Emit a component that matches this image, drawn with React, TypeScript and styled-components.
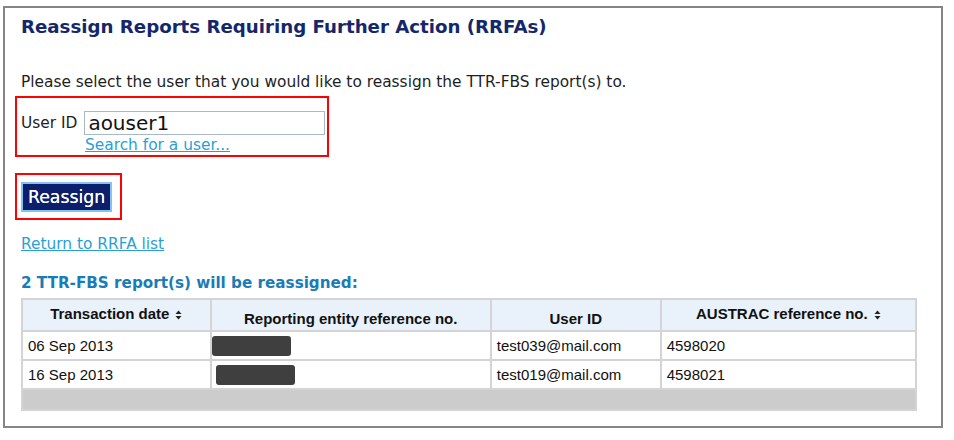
import styled, { createGlobalStyle } from 'styled-components';

const GlobalStyle = createGlobalStyle`
  html, body {
    margin: 0;
    padding: 0;
    background: #ffffff;
  }
  body {
    font-family: 'DejaVu Sans', Verdana, sans-serif;
    color: #222;
  }
`;

const Page = styled.div`
  width: 954px;
  height: 440px;
  padding: 6px 0 0 3px;
  box-sizing: border-box;
`;

const Frame = styled.div`
  width: 940px;
  height: 422px;
  box-sizing: border-box;
  border: 2px solid #858585;
  padding: 8px 0 0 16px;
`;

const Title = styled.h1`
  margin: 0;
  font-size: 18.2px;
  font-weight: bold;
  color: #14276b;
  line-height: 22px;
`;

const Intro = styled.p`
  margin: 34px 0 4px;
  font-size: 15.4px;
  line-height: 20px;
  color: #1e1e1e;
`;

const Highlight = styled.div<{ $width: number; $pad: string }>`
  width: ${({ $width }) => $width}px;
  box-sizing: border-box;
  border: 2px solid #ff0000;
  margin-left: -6px;
  padding: ${({ $pad }) => $pad};
`;

const Spacer = styled.div<{ $h: number }>`
  height: ${({ $h }) => $h}px;
`;

const UserRow = styled.div`
  display: flex;
  align-items: center;
  gap: 7px;
`;

const Label = styled.label`
  font-size: 15.4px;
  color: #1e1e1e;
`;

const Input = styled.input`
  width: 241px;
  height: 24px;
  box-sizing: border-box;
  border: 1px solid #a7b8c9;
  padding: 0 3px;
  font-family: 'DejaVu Sans', Verdana, sans-serif;
  font-size: 20px;
  color: #111;
  outline: none;
`;

const Link = styled.a<{ $indent?: number }>`
  display: inline-block;
  margin-left: ${({ $indent }) => $indent ?? 0}px;
  font-size: 15.4px;
  line-height: 20px;
  color: #2a9fd6;
  text-decoration: underline;
`;

const Button = styled.button`
  display: block;
  height: 30px;
  padding: 0 5px;
  background: #0c1f6c;
  border: 2px solid #86c3ec;
  color: #ffffff;
  font-family: 'DejaVu Sans', Verdana, sans-serif;
  font-size: 17.3px;
  line-height: 26px;
  text-shadow: 0 0 0.4px #ffffff;
  cursor: pointer;
`;

const ReturnRow = styled.div`
  margin-top: 14px;
  line-height: 20px;
`;

const SubHeading = styled.h2`
  margin: 19px 0 0;
  font-size: 15.2px;
  font-weight: bold;
  color: #1a7cb6;
  line-height: 20px;
`;

const Table = styled.table`
  margin-top: 5px;
  width: 896px;
  border-collapse: collapse;
  font-family: 'Liberation Sans', Arial, sans-serif;
  font-size: 15px;
  color: #111;
  border: 2px solid #d4d4d4;
`;

const HeadCell = styled.th<{ $width: number; $sortable?: boolean }>`
  width: ${({ $width }) => $width}px;
  height: 32px;
  box-sizing: border-box;
  background: #e9f1fa;
  border: 2px solid #d4d4d4;
  font-weight: bold;
  text-align: center;
  vertical-align: middle;
  padding: ${({ $sortable }) => ($sortable ? '0 0 4px' : '6px 0 0')};
`;

const Cell = styled.td`
  height: 27px;
  border: 2px solid #d4d4d4;
  padding: 0 5px;
  vertical-align: middle;
`;

const RedactCell = styled.td`
  height: 27px;
  border: 2px solid #d4d4d4;
  padding: 0;
  vertical-align: middle;
`;

const Redaction = styled.span<{ $offset: number }>`
  display: block;
  width: 79px;
  height: 20px;
  margin-left: ${({ $offset }) => $offset}px;
  background: #3f3f3f;
  border-radius: 3px;
`;

const FooterCell = styled.td`
  height: 19px;
  background: #cccccc;
  border: 2px solid #d4d4d4;
  padding: 0;
`;

const SortIcon = () => (
  <svg width="7" height="10" viewBox="0 0 7 10" style={{ marginLeft: 6, verticalAlign: -1 }}>
    <path d="M3.5 0.5 L6.5 4 L0.5 4 Z" fill="#222" />
    <path d="M3.5 9.5 L6.5 6 L0.5 6 Z" fill="#222" />
  </svg>
);

const rows = [
  { date: '06 Sep 2013', offset: 0, user: 'test039@mail.com', ref: '4598020' },
  { date: '16 Sep 2013', offset: 4, user: 'test019@mail.com', ref: '4598021' },
];

export default function App() {
  return (
    <Page>
      <GlobalStyle />
      <Frame>
        <Title>Reassign Reports Requiring Further Action (RRFAs)</Title>
        <Intro>Please select the user that you would like to reassign the TTR-FBS report(s) to.</Intro>

        <Highlight $width={314} $pad="13px 0 0 4px">
          <UserRow>
            <Label htmlFor="user-id">User ID</Label>
            <Input id="user-id" defaultValue="aouser1" />
          </UserRow>
          <Link href="#" $indent={64}>Search for a user...</Link>
        </Highlight>

        <Spacer $h={16} />
        <Highlight $width={107} $pad="7px 0 6px 4px">
          <Button type="button">Reassign</Button>
        </Highlight>

        <ReturnRow>
          <Link href="#">Return to RRFA list</Link>
        </ReturnRow>

        <SubHeading>2 TTR-FBS report(s) will be reassigned:</SubHeading>

        <Table>
          <thead>
            <tr>
              <HeadCell $width={189} $sortable>
                Transaction date
                <SortIcon />
              </HeadCell>
              <HeadCell $width={281}>Reporting entity reference no.</HeadCell>
              <HeadCell $width={170}>User ID</HeadCell>
              <HeadCell $width={256} $sortable>
                AUSTRAC reference no.
                <SortIcon />
              </HeadCell>
            </tr>
          </thead>
          <tbody>
            {rows.map((r) => (
              <tr key={r.ref}>
                <Cell>{r.date}</Cell>
                <RedactCell>
                  <Redaction $offset={r.offset} />
                </RedactCell>
                <Cell>{r.user}</Cell>
                <Cell>{r.ref}</Cell>
              </tr>
            ))}
            <tr>
              <FooterCell colSpan={4} />
            </tr>
          </tbody>
        </Table>
      </Frame>
    </Page>
  );
}
